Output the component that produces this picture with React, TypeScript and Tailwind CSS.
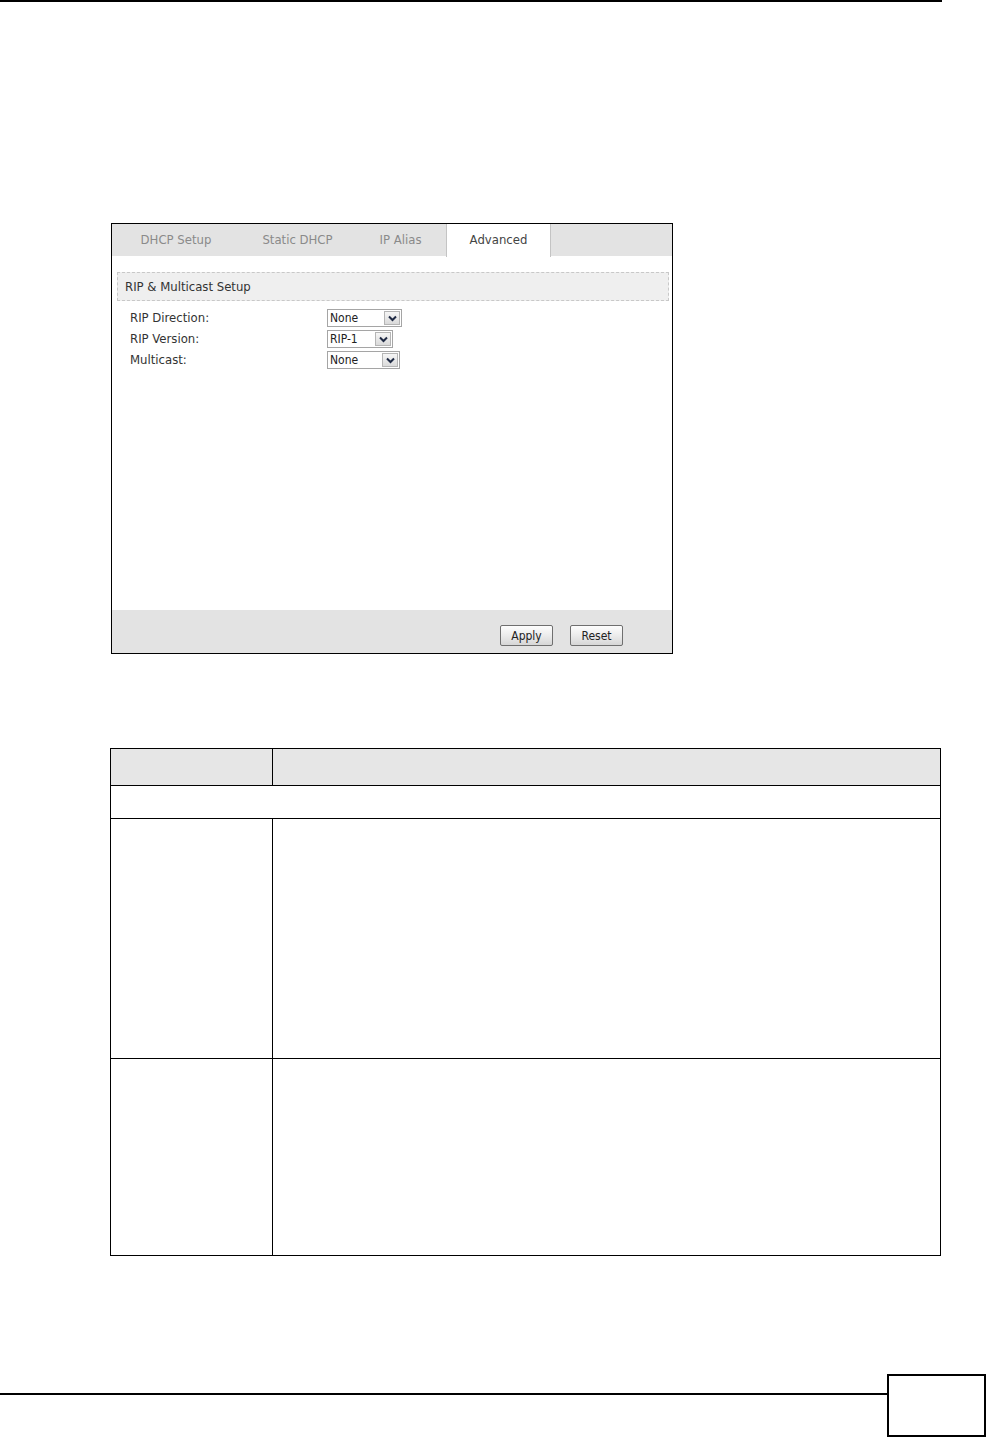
const font = "font-['Tahoma','DejaVu_Sans_Condensed','DejaVu_Sans',sans-serif]";

function Chevron() {
  return (
    <svg width="9" height="7" viewBox="0 0 9 7" className="block">
      <path d="M1 1.5 L4.5 5 L8 1.5" fill="none" stroke="#1f2a44" strokeWidth="2" />
    </svg>
  );
}

function Select({ value, width }: { value: string; width: string }) {
  return (
    <div className={`flex h-[18px] items-center border border-[#a5a5a5] bg-white ${width}`}>
      <span className="flex-1 pl-[2px] text-[12px] leading-none text-[#222]">{value}</span>
      <div className="mr-[1px] flex h-[14px] w-[16px] items-center justify-center border border-[#b5b5b5] bg-gradient-to-b from-[#f6f6f6] to-[#dadada]">
        <Chevron />
      </div>
    </div>
  );
}

function Button({ label }: { label: string }) {
  return (
    <div className="flex h-[21px] w-[53px] items-center justify-center rounded-[2px] border border-[#6f6f6f] bg-gradient-to-b from-[#fdfdfd] via-[#ececec] to-[#d6d6d6] text-[12px] text-[#222]">
      {label}
    </div>
  );
}

const tabs = [
  { label: "DHCP Setup", w: "w-[128px]" },
  { label: "Static DHCP", w: "w-[115px]" },
  { label: "IP Alias", w: "w-[91px]" },
];

const rows = [
  { label: "RIP Direction:", value: "None", w: "w-[75px]" },
  { label: "RIP Version:", value: "RIP-1", w: "w-[66px]" },
  { label: "Multicast:", value: "None", w: "w-[73px]" },
];

export default function App() {
  return (
    <div className="h-[1438px] w-[987px] bg-white">
      <div className="h-[2px] w-[942px] bg-black" />

      {/* screenshot panel */}
      <div className={`ml-[111px] mt-[221px] flex h-[431px] w-[562px] flex-col border border-black ${font}`}>
        <div className="flex h-[32px] shrink-0 bg-[#e3e3e3]">
          {tabs.map((t) => (
            <div key={t.label} className={`flex items-center justify-center text-[13px] text-[#8a8a8a] ${t.w}`}>
              {t.label}
            </div>
          ))}
          <div className="-mb-px flex h-[33px] w-[105px] items-center justify-center border-x border-[#c4c4c4] bg-white pb-[2px] text-[13px] text-[#444]">
            Advanced
          </div>
        </div>

        <div className="flex-1">
          <div className="ml-[5px] mr-[3px] mt-[16px] flex h-[29px] items-center border border-dashed border-[#c8c8c8] bg-[#efefef] pl-[7px] text-[13px] text-[#333]">
            RIP &amp; Multicast Setup
          </div>
          <div className="mt-[8px] flex flex-col gap-[3px] pl-[18px]">
            {rows.map((r) => (
              <div key={r.label} className="flex h-[18px] items-center">
                <span className="w-[197px] text-[13px] text-[#333]">{r.label}</span>
                <Select value={r.value} width={r.w} />
              </div>
            ))}
          </div>
        </div>

        <div className="flex h-[43px] shrink-0 items-center gap-[17px] bg-[#e3e3e3] pl-[388px] pt-[8px]">
          <Button label="Apply" />
          <Button label="Reset" />
        </div>
      </div>

      {/* description table */}
      <div className="ml-[110px] mt-[94px] w-[831px] border-[1.5px] border-black">
        <div className="flex h-[37px] border-b-[1.5px] border-black bg-[#e6e6e6]">
          <div className="w-[162px] border-r-[1.5px] border-black" />
          <div className="flex-1" />
        </div>
        <div className="h-[33px] border-b-[1.5px] border-black" />
        <div className="flex h-[240px] border-b-[1.5px] border-black">
          <div className="w-[162px] border-r-[1.5px] border-black" />
          <div className="flex-1" />
        </div>
        <div className="flex h-[196px]">
          <div className="w-[162px] border-r-[1.5px] border-black" />
          <div className="flex-1" />
        </div>
      </div>

      {/* page footer */}
      <div className="mt-[118px] flex items-start">
        <div className="mt-[19px] h-[2px] w-[887px] bg-black" />
        <div className="h-[63px] w-[99px] border-2 border-black" />
      </div>
    </div>
  );
}
